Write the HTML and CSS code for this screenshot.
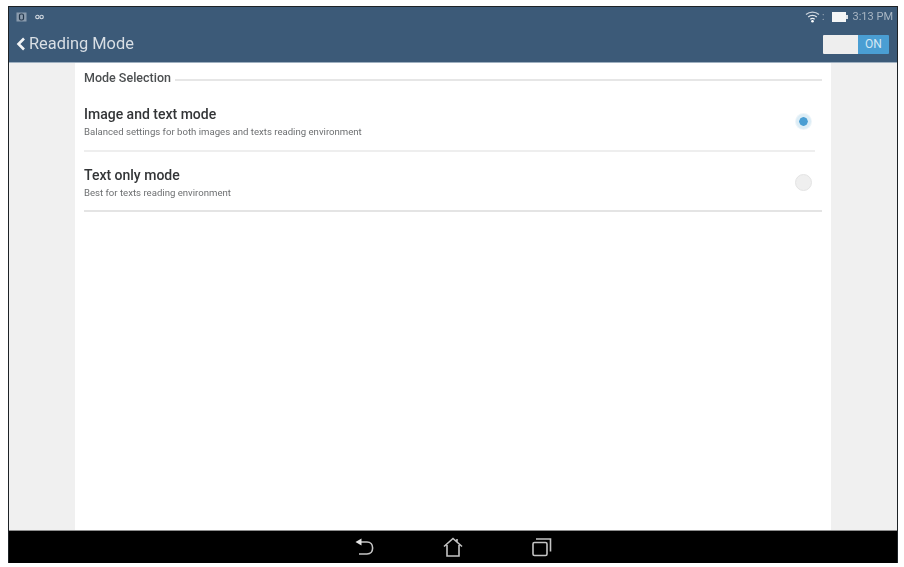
FILE: index.html
```html
<!DOCTYPE html>
<html lang="en">
<head>
<meta charset="utf-8">
<title>Reading Mode</title>
<link rel="stylesheet" href="styles.css">
</head>
<body>
<div class="device">
  <header class="header">
    <div class="status">
      <div class="status-left">
        <svg class="ic-shot" width="11" height="10" viewBox="0 0 11 10"><rect x="0.500" y="0.500" width="10" height="9" fill="#8a9bad"/><rect x="3.500" y="2" width="4" height="6" rx="1.500" fill="none" stroke="#23374c" stroke-width="1.200"/></svg>
        <svg class="ic-loop" width="9" height="6" viewBox="0 0 9 6"><circle cx="2.400" cy="3" r="1.700" fill="none" stroke="#d5dbe2" stroke-width="1.100"/><circle cx="6.600" cy="3" r="1.700" fill="none" stroke="#d5dbe2" stroke-width="1.100"/></svg>
      </div>
      <div class="status-right">
        <svg width="15" height="12" viewBox="0 0 15 12"><path d="M1 3.600C4.600.4 10.400.4 14 3.600" fill="none" stroke="#c9d1da" stroke-width="1.300"/><path d="M3.200 6C5.600 3.900 9.400 3.900 11.800 6" fill="none" stroke="#dfe4e9" stroke-width="1.300"/><path d="M5.300 8.300C6.600 7.200 8.400 7.200 9.700 8.300" fill="none" stroke="#eef1f3" stroke-width="1.300"/><circle cx="7.500" cy="10.300" r="1.300" fill="#fff"/></svg>
        <span class="dots">:</span>
        <span class="battery"></span>
        <span class="clock">3:13 PM</span>
      </div>
    </div>
    <div class="appbar">
      <div class="title-wrap">
        <svg width="10" height="14" viewBox="0 0 10 14"><path d="M8 1.500 2.500 7 8 12.500" fill="none" stroke="#f2f4f6" stroke-width="2.600"/></svg>
        <span class="app-title">Reading Mode</span>
      </div>
      <div class="toggle">
        <span class="toggle-off"></span>
        <span class="toggle-on">ON</span>
      </div>
    </div>
  </header>
  <main class="body">
    <section class="panel">
      <div class="section-head">
        <span class="section-title">Mode Selection</span>
        <span class="section-line"></span>
      </div>
      <div class="option option-first">
        <div class="option-text">
          <div class="option-title">Image and text mode</div>
          <div class="option-sub">Balanced settings for both images and texts reading environment</div>
        </div>
        <span class="radio radio-on"></span>
      </div>
      <div class="option option-last">
        <div class="option-text">
          <div class="option-title">Text only mode</div>
          <div class="option-sub">Best for texts reading environment</div>
        </div>
        <span class="radio"></span>
      </div>
    </section>
  </main>
  <nav class="nav">
    <svg width="20" height="20" viewBox="0 0 20 20"><path d="M3 5H13C20.500 5 20.500 17 13 17H5" fill="none" stroke="#c4c4c4" stroke-width="1.600"/><path d="M7.500 1.500 1.500 5 7.500 8.500Z" fill="#e4e4e4"/></svg>
    <svg width="22" height="20" viewBox="0 0 22 20"><path d="M2 9.500 11 1.500 20 9.500M5 8V19H17V8M15 2V5.500" fill="none" stroke="#c4c4c4" stroke-width="1.600"/></svg>
    <svg width="20" height="20" viewBox="0 0 20 20"><rect x="1" y="5.500" width="14" height="13" rx="1.500" fill="none" stroke="#c4c4c4" stroke-width="1.600"/><path d="M4 2H18.500V14.500" fill="none" stroke="#c4c4c4" stroke-width="1.600"/></svg>
  </nav>
</div>
</body>
</html>
```
FILE: styles.css
```css
* { box-sizing: border-box; }
html, body { margin: 0; height: 100%; background: #fff; }
body { padding: 6px 6px 4px 8px; font-family: Roboto, "Liberation Sans", sans-serif; overflow: hidden; }
.device { height: 557px; border: 1px solid #1d2226; border-bottom: 0; display: flex; flex-direction: column; background: #f0f0f0; }

.header { height: 56px; background: #3c5a78; border-bottom: 1px solid #9fb0c0; flex: none; }
.status { height: 20px; display: flex; justify-content: space-between; align-items: center; padding: 0 4px 1px 7px; }
.status-left { display: flex; align-items: center; gap: 8px; }
.status-right { display: flex; align-items: center; }
.dots { color: #aab6c2; font-size: 10px; margin: 0 7px 0 2px; line-height: 10px; }
.battery { width: 16px; height: 10px; margin-right: 5px; background: linear-gradient(#f4f5f6, #f4f5f6) left center / 14px 100% no-repeat, linear-gradient(#dfe4e9, #dfe4e9) right center / 2px 4px no-repeat; }
.clock { color: #a9b6c3; font-size: 11px; line-height: 12px; }

.appbar { height: 35px; display: flex; justify-content: space-between; align-items: center; padding: 0 8px 1px 7px; }
.title-wrap { display: flex; align-items: center; gap: 3px; }
.app-title { color: #d9dfe5; font-size: 16.400px; line-height: 20px; }
.toggle { display: flex; width: 66px; height: 19px; border-radius: 1px; overflow: hidden; }
.toggle-off { width: 35px; background: #eeeeee; }
.toggle-on { flex: 1; background: #4a9ed3; color: #d5e8f3; font-size: 12px; line-height: 19px; text-align: center; font-weight: 400; }

.body { flex: 1; min-height: 0; display: flex; justify-content: center; }
.panel { width: 756px; background: #fff; padding: 0 9px; }

.section-head { display: flex; align-items: center; gap: 4px; height: 27px; padding-top: 2px; }
.section-title { color: #4c4f51; font-size: 12.500px; font-weight: 500; line-height: 14px; }
.section-line { flex: 1; height: 2px; background: #e6e6e6; margin-top: 4px; }

.option { display: flex; align-items: center; justify-content: space-between; padding-right: 11px; }
.option-first { height: 62px; margin-right: 7px; padding: 2px 3px 0 0; border-bottom: 2px solid #eeeeee; }
.option-last { height: 60px; padding-top: 2px; padding-right: 10px; border-bottom: 2px solid #e4e4e4; }
.option-text { display: flex; flex-direction: column; gap: 3px; padding-top: 2px; }
.option-title { color: #333537; font-size: 14px; font-weight: 500; line-height: 17px; }
.option-sub { color: #6d6f71; font-size: 9.600px; line-height: 12px; }
.radio { width: 17px; height: 17px; border-radius: 50%; background: #efefef; border: 1px solid #e4e4e4; }
.radio-on { width: 15px; height: 15px; margin-right: 1px; background: #4a9ed3; border: 3px solid #dcedf6; background-clip: padding-box; box-shadow: 0 0 0 1px #eef5f9; }

.nav { height: 33px; background: #000; border-top: 1px solid #8e8e8e; flex: none; display: flex; justify-content: center; align-items: center; gap: 68px; }

.status, .appbar, .section-head, .option-text, .nav svg { filter: blur(0.35px); }
```
